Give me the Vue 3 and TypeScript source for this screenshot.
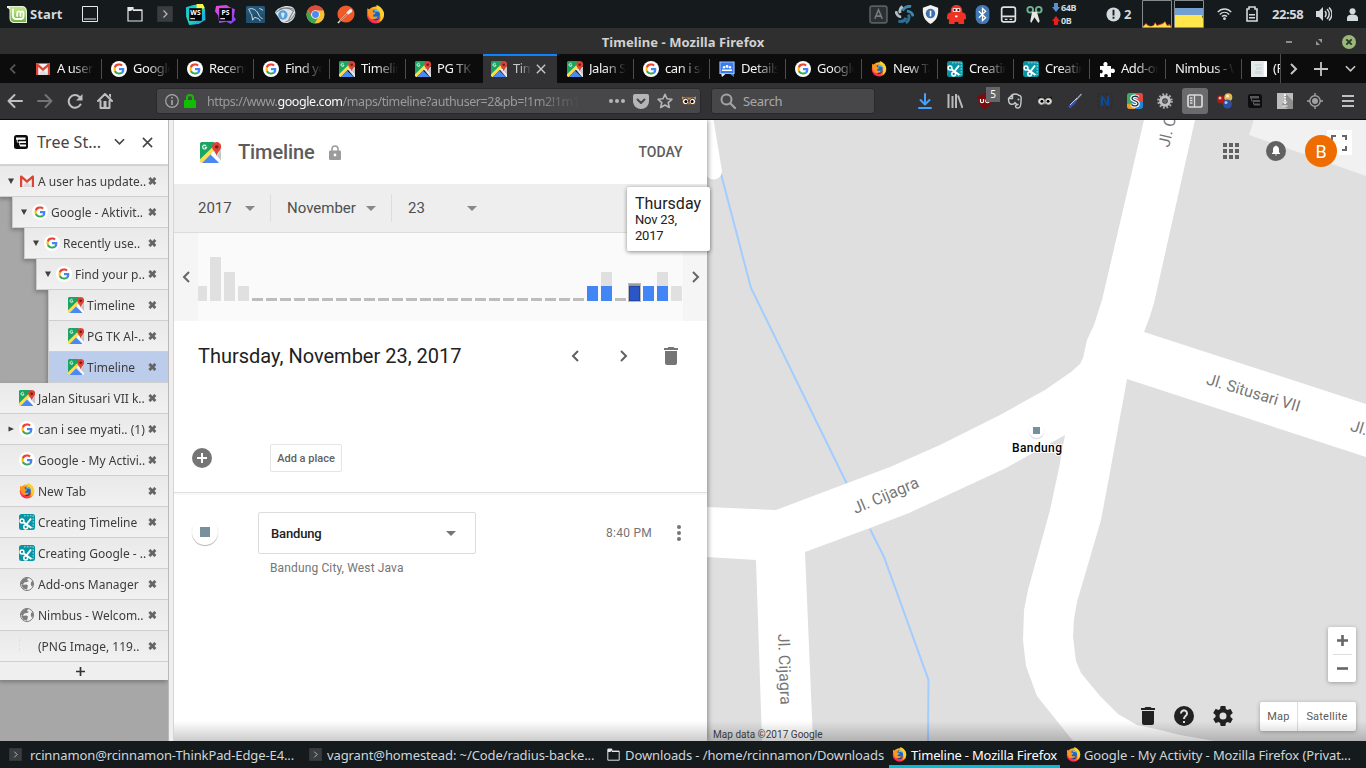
<script setup lang="ts">
interface BrowserTab { icon: string; label: string; active?: boolean }
interface TreeRow { icon: string; label: string; level: number; twisty?: 'open' | 'shut'; active?: boolean }
interface Bar { total: number; blue?: boolean; idle?: boolean; selected?: boolean }

const launchers: string[] = ['folder', 'term', 'ws', 'ps', 'mysql', 'eye', 'chrome', 'postman', 'firefox']
const tray: string[] = ['akey', 'shutter', 'shield', 'robot', 'bt', 'disk', 'clip']

const tabs: BrowserTab[] = [
  { icon: 'gmail', label: 'A user has' },
  { icon: 'gdisc', label: 'Google - A' },
  { icon: 'gdisc', label: 'Recently u' },
  { icon: 'gdisc', label: 'Find your' },
  { icon: 'maps', label: 'Timeline' },
  { icon: 'maps', label: 'PG TK Al' },
  { icon: 'maps', label: 'Timeline', active: true },
  { icon: 'maps', label: 'Jalan Situ' },
  { icon: 'gdisc', label: 'can i see' },
  { icon: 'forum', label: 'Details' },
  { icon: 'gdisc', label: 'Google - M' },
  { icon: 'firefox', label: 'New Tab' },
  { icon: 'snip', label: 'Creating' },
  { icon: 'snip', label: 'Creating' },
  { icon: 'puzzle', label: 'Add-ons' },
  { icon: '', label: 'Nimbus - We' },
  { icon: 'png', label: '(PNG' },
]

const tools: string[] = ['download', 'library', 'ublock', 'evernote', 'owl', 'pen', 'nimbus', 'sfox', 'cog', 'sidebar', 'balls', 'tree', 'zip', 'target']

const rows: TreeRow[] = [
  { icon: 'gmail', label: 'A user has update..', level: 0, twisty: 'open' },
  { icon: 'gdisc', label: 'Google - Aktivit..', level: 1, twisty: 'open' },
  { icon: 'gdisc', label: 'Recently use..', level: 2, twisty: 'open' },
  { icon: 'gdisc', label: 'Find your p..', level: 3, twisty: 'open' },
  { icon: 'maps', label: 'Timeline', level: 4 },
  { icon: 'maps', label: 'PG TK Al-..', level: 4 },
  { icon: 'maps', label: 'Timeline', level: 4, active: true },
  { icon: 'maps', label: 'Jalan Situsari VII k..', level: 0 },
  { icon: 'gdisc', label: 'can i see myati.. (1)', level: 0, twisty: 'shut' },
  { icon: 'gdisc', label: 'Google - My Activi..', level: 0 },
  { icon: 'firefox', label: 'New Tab', level: 0 },
  { icon: 'snip', label: 'Creating Timeline', level: 0 },
  { icon: 'snip', label: 'Creating Google - ..', level: 0 },
  { icon: 'globe', label: 'Add-ons Manager', level: 0 },
  { icon: 'globe', label: 'Nimbus - Welcom..', level: 0 },
  { icon: 'blank', label: '(PNG Image, 119..', level: 0 },
]

const idle = (n: number): Bar[] => Array.from({ length: n }, () => ({ total: 3, idle: true }))
const bars: Bar[] = [
  { total: 15 }, { total: 44 }, { total: 29 }, { total: 15 },
  ...idle(24),
  { total: 15, blue: true }, { total: 29, blue: true },
  ...idle(1),
  { total: 15, blue: true, selected: true }, { total: 15, blue: true }, { total: 29, blue: true }, { total: 15 },
]

const windows = [
  { icon: 'term', label: 'rcinnamon@rcinnamon-ThinkPad-Edge-E4...', cls: 'w1' },
  { icon: 'term', label: 'vagrant@homestead: ~/Code/radius-backe...', cls: 'w2' },
  { icon: 'folder', label: 'Downloads - /home/rcinnamon/Downloads', cls: 'w3' },
  { icon: 'firefox', label: 'Timeline - Mozilla Firefox', cls: 'w4' },
  { icon: 'firefox', label: 'Google - My Activity - Mozilla Firefox (Privat...', cls: 'w5' },
]
</script>

<template>
  <div class="screen">
    <svg class="sprite" width="0" height="0" aria-hidden="true">
      <defs>
        <linearGradient id="fxg" x1="0.8" y1="0" x2="0.2" y2="1">
          <stop offset="0" stop-color="#ffe226" /><stop offset="0.45" stop-color="#ff8a16" /><stop offset="0.8" stop-color="#ff3647" /><stop offset="1" stop-color="#d61b7f" />
        </linearGradient>
        <linearGradient id="wsg" x1="0" y1="0" x2="1" y2="1">
          <stop offset="0" stop-color="#12c0e0" /><stop offset="0.5" stop-color="#20d8b8" /><stop offset="0.75" stop-color="#18b0e0" /><stop offset="1" stop-color="#18c8e0" />
        </linearGradient>
        <linearGradient id="psg" x1="0" y1="0" x2="1" y2="1">
          <stop offset="0" stop-color="#f04ad8" /><stop offset="1" stop-color="#7a45f5" />
        </linearGradient>
        <linearGradient id="mtg" x1="0" y1="0" x2="0" y2="1">
          <stop offset="0" stop-color="#c4e88c" /><stop offset="1" stop-color="#6fb53c" />
        </linearGradient>
      </defs>

      <symbol id="g" viewBox="0 0 24 24">
        <path fill="#4285f4" d="M23.5 12.3c0-.9-.1-1.5-.2-2.2H12v4.500h6.500c-.1 1.100-.8 2.700-2.400 3.800l3.700 2.900c2.300-2.100 3.700-5.200 3.700-9z" />
        <path fill="#34a853" d="M12 24c3.200 0 5.900-1.100 7.900-2.900l-3.800-2.900c-1 .7-2.400 1.200-4.100 1.200-3.100 0-5.800-2.100-6.700-4.900l-3.900 3C3.400 21.400 7.400 24 12 24z" />
        <path fill="#fbbc05" d="M5.300 14.300c-.3-.7-.4-1.500-.4-2.300s.2-1.600.4-2.300L1.300 6.600C.5 8.200 0 10 0 12s.5 3.800 1.300 5.400z" />
        <path fill="#ea4335" d="M12 4.700c2.200 0 3.700 1 4.600 1.800l3.400-3.300C17.900 1.200 15.200 0 12 0 7.400 0 3.400 2.600 1.300 6.600l4 3.100C6.200 6.900 8.900 4.700 12 4.700z" />
      </symbol>
      <symbol id="gdisc" viewBox="0 0 16 16">
        <circle cx="8" cy="8" r="8" fill="#fff" /><use href="#g" x="2.300" y="2.300" width="11.400" height="11.400" />
      </symbol>
      <symbol id="gmail" viewBox="0 0 16 16">
        <path fill="#f2f2f2" d="M1 2.500h14v11.500H1z" /><path fill="#ddd" d="M3 14l5-6 5 6z" />
        <path fill="#db4437" d="M1 14V3.500C1 2.600 2.300 2.100 3 2.700l5 4.300 5-4.300c.7-.6 2-.1 2 .8V14h-2.200V6L8 10 3.200 6v8z" />
      </symbol>
      <symbol id="maps" viewBox="0 0 16 16">
        <path fill="#1da462" d="M1 0h9.500L14 4 1 15.500 0 14V1z" />
        <path fill="#dcdcdc" d="M16 15L10 8l4-3 2 1z" /><path fill="#c4c4c4" d="M16 6v8.500L13 11z" />
        <path fill="#ffdd4b" d="M0 13.200L11.500 2 13.500 4 2 16H1l-1-1z" />
        <path fill="#4a89f3" d="M8 9.600L14.600 16H1.600z" />
        <path fill="#fff" d="M8.600 8.300l1.500-1.200 5.900 7V16h-1z" opacity=".85" />
        <path fill="#db4437" d="M12.600 0a3.600 3.600 0 0 1 3.600 3.600c0 2.600-2.700 3.400-3.500 7-.8-3.600-3.500-4.400-3.500-7A3.600 3.600 0 0 1 12.600 0z" />
        <circle cx="12.700" cy="3.700" r="1.300" fill="#6d1f19" />
        <path fill="none" stroke="#e8f7ee" stroke-width=".9" d="M4.600 2.800a1.500 1.500 0 1 0 .4 1.300H3.600" />
      </symbol>
      <symbol id="firefox" viewBox="0 0 20 20">
        <circle cx="10" cy="10.500" r="9" fill="url(#fxg)" />
        <path fill="#ffcf2e" d="M11 0c4 1.200 8 5 8 10-.4 4-3 6.500-5 7.500 2-3 2-6 0-9-2-2.500-3.500-4.500-3-8.500z" />
        <circle cx="9.700" cy="9.800" r="5" fill="#1967c6" />
        <path fill="#142f8c" d="M5.500 12c2 4 7 4 9.300 0-.8 5.200-8 6-9.300 0z" />
        <path fill="#ff9420" d="M1.500 3.500L4 5.200l4 .3-1 2 3 .5c.3 1.700-3 2-2.500 3.500 1 1.600 3 .4 4.700.8-2 4-8.500 3.500-9.500-.8C2 9 .8 6.500 1.500 3.500z" />
        <path fill="#5fc7f5" d="M9 4.900c2.800-.6 5 1 5.700 3.200C13 6.800 11 6.500 9 7z" />
      </symbol>
      <symbol id="snip" viewBox="0 0 16 16">
        <rect x="0" y="0" width="16" height="16" rx="2.500" fill="#0795a3" />
        <path fill="none" stroke="#fff" stroke-width=".8" stroke-dasharray="1.700 1.200" d="M5 1.800h9.200v12H11" opacity=".8" />
        <g fill="none" stroke="#fff" stroke-width="1.500"><circle cx="3" cy="7" r="1.900" /><circle cx="6.700" cy="13" r="1.900" /><path stroke-width="2" d="M4.500 8.400l8 5.600M7 11l5-6.500" /></g>
      </symbol>
      <symbol id="puzzle" viewBox="0 0 16 16">
        <path fill="#fff" d="M1 5h4c-1.500-2 0-4 1.500-4S9.500 3 8 5h4v3c2-1.500 4 0 4 1.700S14 13 12 11.500V16H8.500c1-2-.3-3-1.500-3s-2.500 1-1.500 3H1v-4c2 1 2.700-.5 2.700-1.500S3 8 1 9z" />
      </symbol>
      <symbol id="forum" viewBox="0 0 16 16">
        <path fill="#e8eefc" d="M2 12h4v1.500L3 16z" /><path fill="#3a7cf0" d="M1 1h14v15l-4-3H1z" /><path fill="none" stroke="#9dbffa" stroke-width="1.200" d="M1 1h14v11.500H1z" />
        <circle cx="5" cy="6.200" r="1.200" fill="#fff" /><circle cx="8" cy="5.500" r="1.400" fill="#fff" /><circle cx="11" cy="6.200" r="1.200" fill="#fff" /><path fill="#fff" d="M3 10V8.500h10V10z" />
      </symbol>
      <symbol id="png" viewBox="0 0 16 16"><path fill="#e6e9e9" d="M0 0h16v16H0z" /><path fill="#c3d7da" d="M4 3h7v2H4zM5 6h6v3H5zM4 10h7v3H4z" opacity=".6" /><path fill="#fff" d="M13 1h3v14h-3z" /></symbol>
      <symbol id="blank" viewBox="0 0 16 16"><path fill="#c9dfeb" d="M0 1h1v3H0zM0 6h1v2H0zM0 10h1v3H0z" opacity=".7" /></symbol>
      <symbol id="globe" viewBox="0 0 16 16">
        <circle cx="8" cy="8" r="6.500" fill="#f2f2f2" stroke="#777" /><path fill="#7d7d7d" d="M2 6c2-4 5-4.500 7-4L8 4l2 1-2 1-3 .5L4 9 2 8zM2.500 9l5-.5 1.500 1-1 4-4-1zM12 6l2-1 .3 3-1 3-1.500-2z" />
      </symbol>

      <symbol id="mint" viewBox="0 0 20 20">
        <path fill="#e9f3dc" d="M0 2h14.500C18 2 20 4 20 7.500V19H8c-4 0-5.500-2-5.500-5V6C2.500 4.500 1.500 4.500 0 4z" />
        <path fill="url(#mtg)" d="M2 3h12.500C17.500 3 19 5 19 7.500V18H8c-3.500 0-4.500-1.500-4.500-4.500V6C3.500 4.500 3 3.700 2 3z" />
        <path fill="none" stroke="#fff" stroke-width="1.800" stroke-linecap="round" d="M6 5.500v6.500c0 2 1 3 3 3h4.500c2 0 3-1 3-3V9c0-2.200-3-2.200-3 0v3M13.500 9c0-2.200-3.300-2.200-3.300 0v3" />
      </symbol>
      <symbol id="desk" viewBox="0 0 16 16"><path fill="none" stroke="#e8e8e8" d="M.5.5h15v15H.5z" /><path fill="#e8e8e8" d="M2 12.500h12v1H2z" /></symbol>
      <symbol id="folder" viewBox="0 0 16 16"><path fill="none" stroke="#e6e6e6" stroke-width="1.200" d="M1 15V1.500h5V4h9v11z" /><path fill="#e6e6e6" d="M1 1h5v2L4 5H1zM6 3.500h9V5H6z" /></symbol>
      <symbol id="term" viewBox="0 0 16 16"><path fill="#393d40" stroke="#2a2d30" d="M0 0h16v16H0z" /><path fill="none" stroke="#bbb" stroke-width="1.200" d="M6.500 4.500L10 8l-3.500 3.500" /></symbol>
      <symbol id="ws" viewBox="0 0 20 20"><path fill="url(#wsg)" d="M1 3l7-2 8-1 3 5 .5 10L13 19 4 20 1 12z" /><path fill="#fcf84a" d="M11 0h6l2 4-8 1z" /><path fill="#000" d="M4 4h12v12H4z" /><text x="10" y="10.500" font-family="Open Sans, sans-serif" font-size="6.500" font-weight="700" fill="#fff" text-anchor="middle">WS</text><path fill="#fff" d="M5 13.500h4.500v1H5z" /></symbol>
      <symbol id="ps" viewBox="0 0 20 20"><path fill="url(#psg)" d="M1 2l10-1 3 2 5 2-1 7 2 3-5 4-4-2-7 1-1-7-3-4z" /><path fill="#000" d="M4 4h12v12H4z" /><text x="10" y="10.500" font-family="Open Sans, sans-serif" font-size="6.500" font-weight="700" fill="#fff" text-anchor="middle">PS</text><path fill="#fff" d="M5 13.500h4.500v1H5z" /></symbol>
      <symbol id="mysql" viewBox="0 0 20 20"><rect x="0" y="1" width="20" height="18" rx="1.500" fill="#265778" /><path fill="#1b4563" d="M0 10h20v8H0z" opacity=".5" /><path fill="none" stroke="#d6e4ec" d="M2.500 4.500c5-2 9 1 11 6 .7 2 2 3 4 4M3 5c2 2 1 4 3 5l1 6 2-3c3 1 5 1 6 4M14 3.500l4 2" /></symbol>
      <symbol id="eye" viewBox="0 0 20 20"><path fill="#dce2e6" d="M0 8c3-6 14-8 18-4 3 5 1 12-6 14-4 .5-7-1-8-4z" /><path fill="none" stroke="#79858e" d="M1 8c6-5 12-5 17-1M4 5c5-2 9-2 14 0M19 9c-2 5-5 7-9 8M18 6l-5 9" /><circle cx="7.500" cy="10.500" r="4.500" fill="#5aa0d8" /><path fill="#fff" d="M5.800 9a2 2 0 0 1 3.400 0c0 1.500-.8 2-1 4H6.800c-.2-2-1-2.500-1-4z" opacity=".75" /></symbol>
      <symbol id="chrome" viewBox="0 0 20 20"><circle cx="10" cy="10" r="9.500" fill="#fbc02d" /><path fill="#dd4b3e" d="M1.800 5.300A9.500 9.500 0 0 1 18.400 5.700H10a4.500 4.500 0 0 0-4.200 5.800z" /><path fill="#3aa757" d="M1.800 5.300A9.500 9.500 0 0 0 9 19.500L13 13a4.500 4.500 0 0 1-7-1z" /><circle cx="10" cy="10" r="4.600" fill="#f1f1f1" /><circle cx="10" cy="10" r="3.600" fill="#4a8af4" /></symbol>
      <symbol id="postman" viewBox="0 0 20 20"><circle cx="10.500" cy="9.500" r="9" fill="#f05a28" /><path stroke="#f5d9cc" stroke-width="1.600" d="M2 19l10-10" /><path stroke="#7a4a38" stroke-width=".8" d="M4 17l8-8" /><path fill="#eee" d="M11 8l4-4 2 1v2l-4 3z" /></symbol>

      <symbol id="akey" viewBox="0 0 18 18"><rect x="1" y="1" width="16" height="16" rx="2" fill="#2b3033" stroke="#585d60" stroke-width="1.600" /><path fill="none" stroke="#787c7e" stroke-width="1.500" d="M5.500 13L9 4.500l3.500 8.500M6.700 10.500h4.600" /></symbol>
      <symbol id="shutter" viewBox="0 0 20 20"><g fill="none" stroke-width="3"><path stroke="#3a8ab0" d="M8 6c1-3 5-5 9-4.500M12.500 6.500c3 0 6 2 6.500 5.500" /><path stroke="#2b7197" d="M14 10c1.500 3 .5 6.500-2.500 9M11.500 13.500c-1 3-4 4.500-8 3.500" /><path stroke="#b5bec4" d="M6.500 12.500C4 12.500 1.500 10 1 6.500M5.500 8.500C4.500 6 5.500 3 8 1.500" /></g></symbol>
      <symbol id="shield" viewBox="0 0 18 20"><path fill="#f3f3f0" d="M9 0l8 3c.5 8-1 13-8 17C2 16 .5 11 1 3z" /><circle cx="9" cy="9" r="5" fill="#3e71ad" /><path fill="#fff" d="M8.200 6h1.600v6H8.200z" /></symbol>
      <symbol id="robot" viewBox="0 0 20 20"><path fill="#f03225" d="M4 6c0-8 12-8 12 0v2c3 0 4 2 4 5v2h-2v5h-6v-2H8v2H2v-5H0v-2c0-3 1-5 4-5z" /><path fill="#fff" d="M6 3.500h8v3.500H6zM8.500 11h2.500v2H8.500z" /><path fill="#222" d="M7 4.300h2v2H7zM11 4.300h2v2h-2z" /></symbol>
      <symbol id="bt" viewBox="0 0 14 18"><rect x=".5" width="13" height="18" rx="6" fill="#4477b5" /><path fill="none" stroke="#fff" stroke-width="1.200" d="M3.500 6l6.500 6-3 2.700V3.200L10 6l-6.500 6" /></symbol>
      <symbol id="disk" viewBox="0 0 18 18"><rect x="2.500" y="2" width="13" height="14" rx="2" fill="none" stroke="#e1e1df" stroke-width="1.600" /><path fill="#e1e1df" d="M3 10h12v1.500H3zM5.500 13H8v1.300H5.500zM10 13h2.500v1.300H10z" /></symbol>
      <symbol id="clip" viewBox="0 0 18 20"><g fill="none" stroke="#70b191" stroke-width="2"><circle cx="4.500" cy="5" r="3" /><circle cx="13.500" cy="5" r="3" /></g><path fill="#e7e7e2" d="M6.500 7h5l3 10-1.500 2L9 13l-3.500 6-1-2z" /></symbol>
      <symbol id="alert" viewBox="0 0 16 16"><circle cx="8" cy="8" r="7.500" fill="#d3dadd" /><path fill="#151a1d" d="M7 3h2v6H7zM7 10.500h2v2H7z" /></symbol>
      <symbol id="wifi" viewBox="0 0 16 14"><g fill="none" stroke="#d3dadd" stroke-width="1.500"><path d="M.8 5c4-4.500 10.400-4.500 14.400 0M3 7.500c3-3 7-3 10 0M5.300 9.700c2-1.500 3.500-1.500 5.400 0" /></g><circle cx="8" cy="12" r="1.500" fill="#d3dadd" /></symbol>
      <symbol id="batt" viewBox="0 0 12 16"><path fill="none" stroke="#d3dadd" stroke-width="1.600" d="M1 3h2V1h6v2h2v12H1z" /><path fill="#d3dadd" d="M3 8h6v1.500H3zM3 11h6v1.500H3z" /></symbol>
      <symbol id="vol" viewBox="0 0 16 14"><path fill="#d3dadd" d="M0 4h3l4-4v14l-4-4H0z" /><path fill="none" stroke="#d3dadd" stroke-width="1.500" d="M9 4c1.500 2 1.500 4 0 6M11 2c3 3 3 7 0 10M13 .5c4 4 4 9 0 13" /></symbol>
      <symbol id="user" viewBox="0 0 12 14"><circle cx="6" cy="3.500" r="3.300" fill="#d3dadd" /><path fill="#d3dadd" d="M0 14v-3c0-3 3-4 6-4s6 1 6 4v3z" /></symbol>

      <symbol id="download" viewBox="0 0 16 16"><path fill="none" stroke="#45a1ff" stroke-width="2" stroke-linecap="round" stroke-linejoin="round" d="M8 1v10M3.500 7L8 11.500 12.500 7M2 15h12" /></symbol>
      <symbol id="library" viewBox="0 0 16 16"><path fill="none" stroke="#b9b9ba" stroke-width="2" d="M1.500 1v14M5.500 3v12M9 1v14M11 2.500L15.500 15" /></symbol>
      <symbol id="ublock" viewBox="0 0 16 16"><path fill="#7d0a0c" d="M8 0c2 1.500 4.500 2 7 2 .3 7-1 10.500-7 14C2 12.500.7 9 1 2c2.500 0 5-.5 7-2z" /><path fill="none" stroke="#fff" stroke-width="1.200" d="M3.500 6v2.500c0 1.500 3 1.500 3 0V6" /><circle cx="10.500" cy="8" r="1.800" fill="none" stroke="#fff" stroke-width="1.100" /></symbol>
      <symbol id="evernote" viewBox="0 0 16 16"><path fill="none" stroke="#c5cbca" stroke-width="1.400" stroke-linejoin="round" d="M1.500 5.500h4V1.500zM1.500 5.500c0 3 .5 5 2 5.500 2 .5 4 .3 4.500-1.500.5 1.500 2 2 3.500 2M5.500 1.500c3-1 5-.5 6 .7 2.500.2 3 1.500 2.500 5.800 0 4-.5 7-3 7-3.500 0-3-3.500-.3-3.300" /><circle cx="11.500" cy="6.500" r="1" fill="#c5cbca" /></symbol>
      <symbol id="owl" viewBox="0 0 16 16"><path fill="#1b1715" d="M1 3.500l7 1.500 7-1.500V7H1z" /><circle cx="4.500" cy="8.300" r="3.100" fill="#eee" stroke="#a5a3a0" /><circle cx="11.500" cy="8.300" r="3.100" fill="#eee" stroke="#a5a3a0" /><circle cx="4.900" cy="8.300" r="1.500" /><circle cx="11.100" cy="8.300" r="1.500" /><path fill="#bbb" d="M7 9.500h2l-1 2.500z" /></symbol>
      <symbol id="owl2" viewBox="0 0 16 16"><path fill="#c98f4c" d="M1 3.500l3 1h8l3-1V7H1z" /><circle cx="4.500" cy="8.500" r="3.200" fill="#fff" stroke="#4a2e1d" /><circle cx="11.500" cy="8.500" r="3.200" fill="#fff" stroke="#4a2e1d" /><circle cx="4.900" cy="8.500" r="1.500" /><circle cx="11.100" cy="8.500" r="1.500" /><path fill="#e58e2e" d="M7 9.500h2L8 12z" /></symbol>
      <symbol id="pen" viewBox="0 0 16 16"><path stroke="#9fa6b8" stroke-width="1.300" d="M8 8l6.500-7" /><path stroke="#3450c8" stroke-width="3" stroke-linecap="round" d="M3 13.500l5-5" /><path stroke="#cdd5ff" stroke-width=".9" d="M3 12l7-7" /></symbol>
      <symbol id="nimbus" viewBox="0 0 16 16"><path fill="none" stroke="#29292c" stroke-dasharray="2 2" d="M1 1h14v14H1z" /><path fill="#084a9b" d="M3.800 12.500v-9h2.400l3.800 6v-6h2.300v9H9.900l-3.800-6v6z" /></symbol>
      <symbol id="sfox" viewBox="0 0 16 16"><rect width="16" height="16" rx="3" fill="#1d87d8" /><path fill="#e2483d" d="M7 0h6a3 3 0 0 1 3 3v6L8 8z" /><path fill="#37ac62" d="M3 0h6L6 9l-6 3V3a3 3 0 0 1 3-3z" /><path fill="#ed9b28" d="M0 11l6-1 2 6H3a3 3 0 0 1-3-3z" /><path fill="none" stroke="#fff" stroke-width="3.600" d="M11.500 4.500C9 2.500 5 3 5 5.500s6 2 6 5-4.500 3-6.500 1" /><path fill="none" stroke="#1c2f48" stroke-width="1.300" d="M11.500 4.500C9 2.500 5 3 5 5.500s6 2 6 5-4.500 3-6.500 1" /></symbol>
      <symbol id="cog" viewBox="0 0 16 16"><circle cx="8" cy="8" r="6.500" fill="none" stroke="#aaa" stroke-width="2.500" stroke-dasharray="1.800 1.600" /><circle cx="8" cy="8" r="4.300" fill="none" stroke="#c2c2c2" stroke-width="3" /><circle cx="8" cy="8" r="2" fill="#66686b" /></symbol>
      <symbol id="sidebar" viewBox="0 0 16 16"><rect x="1" y="2" width="14" height="12" rx="1.800" fill="none" stroke="#dadada" stroke-width="1.700" /><path stroke="#dadada" stroke-width="1.300" d="M7.500 2v12M3 5h2.500M3 7.500h2.500M3 10h2.500" /></symbol>
      <symbol id="balls" viewBox="0 0 16 16"><circle cx="4" cy="6.500" r="4" fill="#a71d1d" /><circle cx="11.300" cy="4.200" r="4" fill="#e5b752" /><circle cx="10.500" cy="11" r="4.500" fill="#2d50a3" /><circle cx="3" cy="5" r="1.500" fill="#f5b6a8" /><circle cx="10.500" cy="3" r="1.500" fill="#fff2c5" /><circle cx="9" cy="9.500" r="1.500" fill="#a9c3f5" /></symbol>
      <symbol id="tree" viewBox="0 0 16 16"><rect x="1" y="1" width="14" height="14" rx="2.500" fill="#0d0d0d" /><path fill="#58585c" d="M3 3h9v2.500H3zM6 7h7v2H6zM7 10.500h6v2H7z" /><path fill="none" stroke="#58585c" d="M4.500 5v3H6M6.500 9v2.500" /></symbol>
      <symbol id="zip" viewBox="0 0 16 16"><path fill="#bcbcbc" d="M0 0h16v16H0z" /><path fill="#8f8f8f" d="M9 1l7 7v8h-5L5 12z" /><path fill="#f5f5f5" d="M7 1h2v2H7zM7 4h2v1.500H7zM7 6.500h2V8H7zM5.500 8.500h5L8 11.500zM5.500 12.500h5v1h-5z" /></symbol>
      <symbol id="target" viewBox="0 0 16 16"><circle cx="8" cy="8" r="5.200" fill="none" stroke="#a2a2a4" stroke-width="1.400" /><circle cx="8" cy="8" r="3" fill="#a2a2a4" /><path stroke="#a2a2a4" stroke-width="1.400" d="M8 0v3M8 13v3M0 8h3M13 8h3" /></symbol>

      <symbol id="tri" viewBox="0 0 10 5"><path fill="currentColor" d="M0 0h10L5 5z" /></symbol>
      <symbol id="open" viewBox="0 0 6 6"><path fill="#3f3f3f" d="M0 .5h6L3 6z" /></symbol>
      <symbol id="shut" viewBox="0 0 6 6"><path fill="#3f3f3f" d="M.5 .5L6 3 .5 5.500z" /></symbol>
      <symbol id="chl" viewBox="0 0 8 12"><path fill="none" stroke="currentColor" stroke-width="2" d="M7 1L2 6l5 5" /></symbol>
      <symbol id="chr" viewBox="0 0 8 12"><path fill="none" stroke="currentColor" stroke-width="2" d="M1 1l5 5-5 5" /></symbol>
      <symbol id="chd" viewBox="0 0 12 8"><path fill="none" stroke="currentColor" stroke-width="1.800" d="M1 1l5 5 5-5" /></symbol>
      <symbol id="cross" viewBox="0 0 12 12"><path stroke="currentColor" stroke-width="1.700" d="M1 1l10 10M11 1L1 11" /></symbol>
      <symbol id="trash" viewBox="0 0 14 18"><path fill="currentColor" d="M1 4h12v12a2 2 0 0 1-2 2H3a2 2 0 0 1-2-2zM0 1h3.500l1-1h5l1 1H14v2H0z" /></symbol>
      <symbol id="help" viewBox="0 0 20 20"><circle cx="10" cy="10" r="10" fill="#212121" /><path fill="none" stroke="#e0e0e0" stroke-width="2" d="M7 7.500a3 3 0 1 1 4.800 2.300C10.800 10.600 10 11 10 13" /><path fill="#e0e0e0" d="M9 15h2v2H9z" /></symbol>
      <symbol id="gear" viewBox="2 2 20 20"><path fill="#212121" d="M19.430 12.980c.04-.32.07-.64.07-.98s-.03-.66-.07-.98l2.110-1.650c.19-.15.240-.42.120-.64l-2-3.460c-.12-.22-.39-.3-.61-.22l-2.490 1c-.52-.4-1.080-.73-1.690-.98l-.38-2.650C14.460 2.180 14.250 2 14 2h-4c-.25 0-.46.180-.49.420l-.38 2.650c-.61.250-1.170.590-1.690.98l-2.490-1c-.23-.09-.49 0-.61.220l-2 3.460c-.13.220-.07.490.12.640l2.110 1.650c-.04.320-.07.650-.07.980s.03.660.07.980l-2.110 1.650c-.19.150-.240.420-.12.640l2 3.460c.12.220.39.300.61.220l2.490-1c.52.400 1.080.730 1.690.980l.38 2.650c.03.240.240.420.49.420h4c.25 0 .46-.18.49-.42l.38-2.650c.61-.25 1.170-.59 1.690-.98l2.490 1c.23.090.49 0 .61-.22l2-3.460c.12-.22.07-.49-.12-.64zM12 15.500a3.500 3.500 0 1 1 0-7 3.500 3.500 0 0 1 0 7z" /></symbol>
    </svg>

    <header class="panel">
      <svg class="mint"><use href="#mint" /></svg>
      <span class="start">Start</span>
      <svg class="desk"><use href="#desk" /></svg>
      <div class="launchers">
        <span v-for="name in launchers" :key="name" class="cell30"><svg :class="['ic', 'l-' + name]"><use :href="'#' + name" /></svg></span>
      </div>
      <div class="tray">
        <span v-for="name in tray" :key="name" class="cell26"><svg class="i18"><use :href="'#' + name" /></svg></span>
      </div>
      <div class="net">
        <div class="netline"><svg width="8" height="9" viewBox="0 0 8 9"><path fill="#5a8fd0" d="M2 0h4v4h2L4 9 0 4h2z" /></svg>64B</div>
        <div class="netline"><svg width="8" height="9" viewBox="0 0 8 9"><path fill="#e32020" d="M2 9h4V5h2L4 0 0 5h2z" /></svg>0B</div>
      </div>
      <svg class="alert"><use href="#alert" /></svg><span class="two">2</span>
      <svg class="graph" viewBox="0 0 30 28"><path fill="#151a1d" stroke="#858a8c" d="M.5.500h29v27H.5z" /><path fill="#e0402a" d="M1 27v-1l3-3 2 2 3 1 3-1 1-3 2 3 3-1 3-1 2-2 2 4 3-1 1 3z" /><path fill="#ffe14a" d="M1 27l3-3 2 2 3 .5 3-1 1-2.500 2 3 3-1 3-1 2-2 2 4 3-.5 1 1.500z" /></svg>
      <svg class="graph" viewBox="0 0 30 28"><path fill="#0f1417" stroke="#858a8c" d="M.5.500h29v27H.5z" /><path fill="#729fcf" d="M1 8h28v8H1z" /><path fill="#ffe64d" d="M1 15h27l1 4v8H1z" /></svg>
      <svg class="wifi"><use href="#wifi" /></svg>
      <svg class="batt"><use href="#batt" /></svg>
      <span class="clock">22:58</span>
      <svg class="vol"><use href="#vol" /></svg>
      <svg class="user"><use href="#user" /></svg>
    </header>

    <div class="titlebar">
      <span class="wtitle">Timeline - Mozilla Firefox</span>
      <div class="wbtns">
        <span class="minbtn"></span>
        <svg width="6" height="6" viewBox="0 0 6 6"><path fill="#999" d="M2 0h4v4zM0 2l4 4H0z" /></svg>
        <svg width="14" height="14" viewBox="0 0 14 14"><circle cx="7" cy="7" r="7" fill="#9ab87c" /><path stroke="#2d3326" stroke-width="1.800" d="M4.300 4.300l5.400 5.400M9.700 4.300L4.300 9.700" /></svg>
      </div>
    </div>

    <nav class="tabs">
      <span class="scroll dim"><svg width="7" height="12"><use href="#chl" /></svg></span>
      <div class="tablist">
        <div v-for="(t, i) in tabs" :key="i" :class="['tab', { active: t.active, before: i === 5, noicon: !t.icon }]">
          <svg v-if="t.icon" class="i16"><use :href="'#' + t.icon" /></svg>
          <span class="tlabel">{{ t.label }}</span>
          <svg v-if="t.active" class="tclose"><use href="#cross" /></svg>
        </div>
      </div>
      <span class="scroll right"><svg width="8" height="12"><use href="#chr" /></svg></span>
      <svg class="plus" viewBox="0 0 14 14"><path stroke="#c5c5c5" stroke-width="1.800" d="M7 0v14M0 7h14" /></svg>
      <svg class="down"><use href="#chd" /></svg>
    </nav>

    <div class="toolbar">
      <div class="navbtns">
        <svg width="16" height="16" viewBox="0 0 16 16"><path fill="none" stroke="#bfbfc0" stroke-width="2" stroke-linecap="round" stroke-linejoin="round" d="M15 8H1.500M7.500 2l-6 6 6 6" /></svg>
        <svg width="16" height="16" viewBox="0 0 16 16"><path fill="none" stroke="#747476" stroke-width="2" stroke-linecap="round" stroke-linejoin="round" d="M1 8h13.500M8.500 2l6 6-6 6" /></svg>
        <svg width="16" height="16" viewBox="0 0 16 16"><path fill="none" stroke="#bfbfc0" stroke-width="2" stroke-linecap="round" d="M13.500 11.500A6.300 6.300 0 1 1 12.500 4" /><path fill="#bfbfc0" d="M15.500 1v6.500H9z" /></svg>
        <svg width="16" height="16" viewBox="0 0 16 16"><path fill="none" stroke="#bfbfc0" stroke-width="2" stroke-linecap="round" stroke-linejoin="round" d="M1 8l7-7 7 7M3.500 8v7h9V8" /><path fill="#bfbfc0" d="M6.500 8h3v7h-3zM12 1h2v4l-2-2z" /></svg>
      </div>
      <div class="urlbar">
        <svg width="14" height="14" viewBox="0 0 14 14"><circle cx="7" cy="7" r="6.300" fill="none" stroke="#a8a8a9" stroke-width="1.200" /><path fill="#a8a8a9" d="M6.200 3h1.600v1.600H6.200zM6.200 6h1.600v5H6.200z" /></svg>
        <svg class="lockg" width="12" height="14" viewBox="0 0 12 14"><path fill="none" stroke="#12bc00" stroke-width="2" d="M3 7V4a3 3 0 0 1 6 0v3" /><rect y="6" width="12" height="8" rx="1" fill="#12bc00" /></svg>
        <span class="url">https://www.<b>google.com</b>/maps/timeline?authuser=2&amp;pb=!1m2!1m1</span>
        <div class="urlicons">
          <svg width="16" height="4" viewBox="0 0 16 4"><g fill="#b5b5b6"><circle cx="2" cy="2" r="2" /><circle cx="8" cy="2" r="2" /><circle cx="14" cy="2" r="2" /></g></svg>
          <svg width="16" height="15" viewBox="0 0 16 15"><path fill="#b5b5b6" d="M2 0h12a2 2 0 0 1 2 2v5c0 5-4 8-8 8S0 12 0 7V2a2 2 0 0 1 2-2z" /><path fill="none" stroke="#474749" stroke-width="2" stroke-linecap="round" stroke-linejoin="round" d="M4.500 5.500L8 9l3.500-3.500" /></svg>
          <svg width="16" height="16" viewBox="0 0 16 16"><path fill="none" stroke="#b5b5b6" stroke-width="1.600" stroke-linejoin="round" d="M8 1.300l2 4.500 4.900.5-3.700 3.300 1.100 4.900L8 12l-4.300 2.500 1.100-4.900L1.100 6.300 6 5.800z" /></svg>
          <svg class="i16"><use href="#owl2" /></svg>
        </div>
      </div>
      <div class="search">
        <svg width="16" height="16" viewBox="0 0 16 16"><circle cx="6.500" cy="6.500" r="5" fill="none" stroke="#a3a3a4" stroke-width="2" /><path stroke="#a3a3a4" stroke-width="2.200" stroke-linecap="round" d="M10.300 10.300L15 15" /></svg>
        <span>Search</span>
      </div>
      <div class="tools">
        <span v-for="name in tools" :key="name" :class="['cell30', { pressed: name === 'sidebar' }]">
          <svg class="i16"><use :href="'#' + name" /></svg>
          <span v-if="name === 'ublock'" class="badge">5</span>
        </span>
      </div>
      <svg class="menu" width="12" height="12" viewBox="0 0 12 12"><path fill="#c0c0c1" d="M0 0h12v2H0zM0 5h12v2H0zM0 10h12v2H0z" /></svg>
    </div>

    <main class="content">
      <aside class="sidebar">
        <div class="sbhead">
          <svg width="14" height="14" viewBox="0 0 14 14"><rect width="14" height="14" rx="2.500" fill="#0c0c0d" /><path fill="#fff" d="M2 2.500h9.500v2.300H2zM5 6.200h7v1.900H5zM6 9.500h6v2H6z" /><path fill="none" stroke="#fff" stroke-width=".8" d="M3.300 4v3.200H5M5.600 8v2.500" /></svg>
          <span class="sbtitle">Tree St...</span>
          <svg class="sbdown"><use href="#chd" /></svg>
          <svg class="sbx"><use href="#cross" /></svg>
        </div>
        <div class="rows">
          <div v-for="(r, i) in rows" :key="i" :class="['trow', 'lv' + r.level, { sel: r.active }]">
            <span class="twisty"><svg v-if="r.twisty" width="6" height="6"><use :href="'#' + r.twisty" /></svg></span>
            <svg class="i16"><use :href="'#' + r.icon" /></svg>
            <span class="rlabel">{{ r.label }}</span>
            <span class="rx">✖</span>
          </div>
          <div class="addrow"><svg width="9" height="9" viewBox="0 0 9 9"><path stroke="#333" stroke-width="1.700" d="M4.500 0v9M0 4.500h9" /></svg></div>
        </div>
      </aside>
      <div class="splitter"></div>

      <section class="timeline">
        <div class="thead">
          <svg class="tlogo"><use href="#maps" /></svg>
          <h1>Timeline</h1>
          <svg class="tlock" viewBox="0 0 12 15"><path fill="none" stroke="#9b9b9b" stroke-width="1.500" d="M3 6V4a3 3 0 0 1 6 0v2" /><rect y="5.500" width="12" height="9.500" rx="1.300" fill="#9b9b9b" /><circle cx="6" cy="10" r="1.400" fill="#fff" /></svg>
          <span class="today">TODAY</span>
        </div>
        <div class="filters">
          <div class="filter year">2017<svg class="tri"><use href="#tri" /></svg></div>
          <div class="filter month">November<svg class="tri"><use href="#tri" /></svg></div>
          <div class="filter day">23<svg class="tri"><use href="#tri" /></svg></div>
          <div class="tip"><strong>Thursday</strong><span>Nov 23,<br>2017</span></div>
        </div>
        <div class="chart">
          <span class="strip"><svg width="8" height="12"><use href="#chl" /></svg></span>
          <div class="bars">
            <div v-for="(b, i) in bars" :key="i" :class="['bar', { idle: b.idle, cur: b.selected }]" :style="{ height: b.total + 'px' }">
              <i v-if="b.blue"></i>
            </div>
          </div>
          <span class="strip"><svg width="8" height="12"><use href="#chr" /></svg></span>
        </div>
        <div class="dateline">
          <h2>Thursday, November 23, 2017</h2>
          <svg class="dprev"><use href="#chl" /></svg>
          <svg class="dnext"><use href="#chr" /></svg>
          <svg class="dtrash"><use href="#trash" /></svg>
        </div>
        <div class="addplace">
          <svg width="20" height="20" viewBox="0 0 20 20"><circle cx="10" cy="10" r="10" fill="#757575" /><path stroke="#fff" stroke-width="2" d="M10 5v10M5 10h10" /></svg>
          <span class="btn">Add a place</span>
        </div>
        <div class="place">
          <span class="pin"><i></i></span>
          <div class="select">Bandung<svg class="tri"><use href="#tri" /></svg></div>
          <span class="time">8:40 PM</span>
          <svg class="kebab" width="4" height="16" viewBox="0 0 4 16"><g fill="#757575"><circle cx="2" cy="2" r="2" /><circle cx="2" cy="8" r="2" /><circle cx="2" cy="14" r="2" /></g></svg>
        </div>
        <div class="addr">Bandung City, West Java</div>
      </section>

      <section class="map">
        <svg class="roads" viewBox="707 120 659 621">
          <path fill="#dfdfdf" d="M707 120h659v621H707z" />
          <path fill="#f1f1f1" d="M1254 120l-5 15 117 41v-56z" />
          <path fill="none" stroke="#a3ccff" stroke-width="2" d="M721 174l30 114 96 196M870 529l14 28 44.500 123-.5 61" />
          <path fill="#fff" d="M707 120h6.500l8.500 51q-1 8-8 8.500-4 0-7-3z" />
          <path fill="#fff" d="M1144 120l-42 180-8 25-7 15-4 18-3 6-9 8-26 18-45 25-60 30-50 22-114 43-69-3v50l49 3 6 181h51l-8-189 65-24 39-15 97-45 59-33-6 33-9 42-22 80-4 20-1 30 3 26 8 22 3 8 36 45h141l-34-6-20-5-23-5-19-11-18-18-19-23-5-12-3-24 1-18 3-17 24-82 9-48 17-93 239 78v-53l-222-72 6-16 4-13 41-183z" />
          <g fill="#777" font-family="Roboto, sans-serif" font-size="16" stroke="#fff" stroke-width="3" paint-order="stroke">
            <text transform="translate(1205.500 384) rotate(16.800)" textLength="97">Jl. Situsari VII</text>
            <text transform="translate(855.500 514) rotate(-23)" textLength="70">Jl. Cijagra</text>
            <text transform="translate(778 634) rotate(88)" textLength="71">Jl. Cijagra</text>
            <text transform="translate(1169 148) rotate(-77)">Jl. Cijagra</text>
            <text transform="translate(1349.500 430.500) rotate(17)">Jl. Situsari VII</text>
          </g>
          <circle cx="1036.500" cy="431" r="8" fill="#d4d4d4" /><circle cx="1036.500" cy="430.200" r="8" fill="#fff" />
          <path fill="#78909c" d="M1033 427h7v7h-7z" />
          <text x="1037" y="452" text-anchor="middle" textLength="50" font-family="Roboto, sans-serif" font-size="12" font-weight="500" fill="#000" stroke="#fff" stroke-width="2" paint-order="stroke">Bandung</text>
          <text x="713" y="738" font-family="Roboto, sans-serif" font-size="10" fill="#444" textLength="109.500">Map data ©2017 Google</text>
        </svg>
        <div class="account">
          <svg width="16" height="16" viewBox="0 0 16 16"><path fill="#616161" d="M0 0h4v4H0zM6 0h4v4H6zM12 0h4v4h-4zM0 6h4v4H0zM6 6h4v4H6zM12 6h4v4h-4zM0 12h4v4H0zM6 12h4v4H6zM12 12h4v4h-4z" /></svg>
          <svg width="20" height="20" viewBox="0 0 20 20"><circle cx="10" cy="10" r="10" fill="#616161" /><path fill="#fff" d="M6 13v-.800l1-1V8.500c0-2 1-3 2.200-3.300a.8.8 0 0 1 1.600 0C12 5.500 13 6.500 13 8.500v2.700l1 1v.8zM9 13.500h2a1 1 0 0 1-2 0z" /></svg>
          <span class="avatar">B</span>
        </div>
        <div class="full"><svg width="16" height="16" viewBox="0 0 16 16"><path fill="none" stroke="#666" stroke-width="2" d="M1 5V1h4M11 1h4v4M15 11v4h-4M5 15H1v-4" /></svg></div>
        <div class="zoom"><svg width="11" height="11" viewBox="0 0 11 11"><path stroke="#666" stroke-width="2.600" d="M5.500 0v11M0 5.500h11" /></svg><hr><svg width="11" height="11" viewBox="0 0 11 11"><path stroke="#666" stroke-width="2.600" d="M0 5.500h11" /></svg></div>
        <div class="mapbar">
          <svg class="mtrash"><use href="#trash" /></svg>
          <svg class="m20"><use href="#help" /></svg>
          <svg class="m20"><use href="#gear" /></svg>
          <div class="types"><span>Map</span><span>Satellite</span></div>
        </div>
      </section>
      <div class="fade"></div>
    </main>

    <footer class="taskbar">
      <div v-for="w in windows" :key="w.cls" :class="['win', w.cls]">
        <svg><use :href="'#' + w.icon" /></svg><span>{{ w.label }}</span>
      </div>
    </footer>
  </div>
</template>

<style>
html, body { margin: 0; overflow: hidden; }
</style>

<style scoped>
* { box-sizing: border-box; }
svg { display: block; flex: none; }
.screen { width: 1366px; height: 768px; display: flex; flex-direction: column; overflow: hidden; font-family: "Noto Sans", sans-serif; position: relative; }
.sprite { position: absolute; }
.i16 { width: 16px; height: 16px; }
.i18 { width: 18px; height: 18px; }
.cell30, .cell26 { display: flex; align-items: center; justify-content: center; width: 30px; flex: none; position: relative; }
.cell26 { width: 26px; }

.panel { height: 28px; flex: none; background: #151a1d; display: flex; align-items: center; color: #d3dadd; }
.mint { width: 20px; height: 20px; margin-left: 7px; }
.start { font-weight: 700; font-size: 13px; margin-left: 3px; width: 52px; letter-spacing: 0.1px; }
.desk { width: 16px; height: 16px; }
.launchers { display: flex; margin-left: 22px; width: 745px; }
.ic { width: 19px; height: 19px; }
.l-folder, .l-term { width: 16px; height: 16px; }
.l-ws, .l-ps, .l-eye { width: 21px; height: 21px; }
.tray { display: flex; width: 183px; }
.tray .i18 { width: 19px; height: 19px; }
.net { width: 58px; margin-left: 4px; font-size: 9px; font-weight: 700; line-height: 12px; letter-spacing: -0.4px; }
.netline { display: flex; align-items: center; gap: 1px; height: 13px; }
.alert { width: 15px; height: 15px; margin-left: -4px; }
.two { font-size: 13px; font-weight: 700; width: 18px; margin-left: 3px; }
.graph { width: 30px; height: 28px; margin-right: 2px; }
.wifi { width: 15px; height: 14px; margin-left: 11px; }
.batt { width: 12px; height: 16px; margin-left: 14px; }
.clock { font-size: 13px; font-weight: 700; width: 34px; margin-left: 14px; letter-spacing: -0.4px; white-space: nowrap; }
.vol { width: 16px; height: 14px; margin-left: 10px; }
.user { width: 11px; height: 13px; margin-left: 15px; }

.titlebar { height: 26px; flex: none; background: #2f2f2f; display: grid; grid-template-columns: 1366px; align-items: center; justify-items: center; }
.titlebar > * { grid-row: 1; grid-column: 1; }
.wtitle { font-size: 13px; font-weight: 700; color: #d2d2d0; line-height: 26px; padding-top: 1px; letter-spacing: 0.06px; }
.wbtns { justify-self: end; display: flex; align-items: center; padding-right: 10px; }
.minbtn { width: 6px; height: 2px; background: #8c8c8c; margin-right: 24px; }
.wbtns svg + svg { margin-left: 20px; }

.tabs { height: 29px; flex: none; background: #0c0c0d; display: flex; align-items: center; color: #c5c5c5; }
.scroll { width: 26px; flex: none; padding-left: 9px; }
.dim { color: #5a5a5b; }
.tablist { display: flex; width: 1255px; height: 29px; overflow: hidden; border-right: 1px solid #4d4d4e; }
.tab { width: 76px; flex: none; display: flex; align-items: center; padding-left: 9px; gap: 6px; height: 29px; background: linear-gradient(#4d4d4e, #4d4d4e) 75px 5px / 1px 20px no-repeat; }
.tab.before { background: none; }
.tab.active { background: #323234; border-top: 2px solid #0a84ff; margin-left: 1px; margin-right: 1px; width: 74px; padding-left: 8px; padding-bottom: 2px; gap: 6px; }
.tlabel { width: 37px; overflow: hidden; white-space: nowrap; font-size: 13px; letter-spacing: -0.45px; color: #f5f5f5; mask-image: linear-gradient(90deg, #000 40%, transparent 100%); line-height: 18px; margin-top: -1px; }
.noicon .tlabel { width: 59px; mask-image: linear-gradient(90deg, #000 65%, transparent); }
.active .tlabel { width: 18px; color: #c8c8c8; }
.tclose { width: 10px; height: 10px; margin-left: -1px; }
.right { width: 33px; padding-left: 9px; }
.plus { width: 14px; height: 14px; margin-right: 17px; }
.down { width: 11px; height: 8px; }

.toolbar { height: 37px; flex: none; background: #323234; border-bottom: 1px solid #0c0c0d; display: flex; align-items: center; }
.navbtns { display: flex; gap: 14px; padding-left: 7px; width: 156px; }
.urlbar { width: 545px; height: 26px; border: 1px solid #29292b; border-radius: 3px; background: #474749; display: flex; align-items: center; padding-left: 8px; }
.lockg { margin-left: 5px; }
.url { font-size: 12.5px; letter-spacing: -0.420px; color: #9b9b9c; width: 373px; margin-left: 11px; overflow: hidden; white-space: nowrap; mask-image: linear-gradient(90deg, #000 88%, transparent 100%); line-height: 22px; padding-top: 1px; }
.url b { font-weight: 400; color: #f9f9fa; }
.urlicons { display: flex; align-items: center; gap: 8px; margin-left: auto; padding-right: 3px; }
.search { margin-left: 10px; width: 164px; height: 26px; border: 1px solid #29292b; border-radius: 3px; background: #474749; display: flex; align-items: center; gap: 7px; padding-left: 8px; color: #a9a9aa; font-size: 13px; letter-spacing: -0.3px; }
.tools { display: flex; margin-left: 35px; width: 431px; height: 36px; }
.pressed::before { content: ""; width: 26px; height: 26px; border-radius: 3px; background: #6b6b6d; margin-right: -21px; flex: none; }
.pressed svg { position: relative; margin-right: 5px; }
.badge { position: absolute; left: 16px; top: 4px; width: 14px; height: 15px; background: #666; color: #fff; font-size: 10px; line-height: 14px; text-align: center; }
.menu { margin-left: 1px; }

.content { height: 621px; flex: none; display: flex; position: relative; }
.sidebar { width: 168px; background: #a7a7a7; display: flex; flex-direction: column; flex: none; overflow: hidden; }
.sbhead { height: 46px; background: #fff; border-bottom: 2px solid #d8d8d8; display: flex; align-items: center; padding: 0 0 0 14px; color: #444; flex: none; }
.sbtitle { font-size: 16px; margin-left: 9px; width: 76.500px; color: #444; white-space: nowrap; margin-top: -1px; }
.sbdown { width: 11px; height: 8px; }
.sbx { width: 11px; height: 11px; margin-left: 17px; }
.rows { display: flex; flex-direction: column; filter: drop-shadow(-1px 2px 2px rgba(0, 0, 0, 0.28)); }
.trow { height: 31px; background: linear-gradient(#e9e9e9, #f1f1f1); border-bottom: 1px solid #cfcfcf; display: flex; align-items: center; font-size: 12px; color: #3c3c3c; white-space: nowrap; padding-right: 11px; }
.trow .i16 { margin-right: 3px; }
.twisty { width: 19px; padding-left: 8px; flex: none; }
.lv1 { margin-left: 12px; } .lv2 { margin-left: 24px; } .lv3 { margin-left: 36px; } .lv4 { margin-left: 48px; }
.lv1, .lv2, .lv3, .lv4 { border-left: 1px solid #ccc; }
.sel { background: #bccdec; }
.rlabel { flex: 1; min-width: 0; }
.rx { font-family: "DejaVu Sans", sans-serif; font-size: 11px; color: #646464; -webkit-text-stroke: 0.4px #646464; }
.addrow { height: 18px; background: #efefef; display: flex; align-items: center; justify-content: center; padding-right: 7px; }
.splitter { width: 6px; background: #efefef; border-left: 1px solid #b9b9b9; border-right: 1px solid #d5d5d5; flex: none; }

.timeline { width: 533px; background: #fff; flex: none; font-family: Roboto, sans-serif; position: relative; z-index: 2; box-shadow: 1px 0 5px rgba(0, 0, 0, 0.4); color: #212121; clip-path: inset(0 -10px 0 0); }
.thead { height: 64px; display: flex; align-items: center; padding-left: 26px; }
.tlogo { width: 21px; height: 21px; }
h1 { margin: 0 0 0 17px; font-size: 20px; font-weight: 500; color: #5c5c5c; line-height: 24px; width: 91px; letter-spacing: -0.1px; }
.tlock { width: 12px; height: 15px; margin-top: 1px; }
.today { margin-left: auto; margin-right: 24.500px; font-size: 14px; font-weight: 500; color: #5c5c5c; }
.filters { height: 49px; background: #eee; border-bottom: 1px solid #dcdcdc; display: flex; align-items: center; font-size: 15px; color: #4e4e4e; position: relative; }
.filter { height: 28px; display: flex; align-items: center; justify-content: space-between; border-right: 1px solid #ddd; }
.filter .tri { color: #888; margin-right: 15px; margin-top: 1px; }
.year { margin-left: 24px; width: 73px; }
.month { width: 121px; padding-left: 16px; }
.day { width: 100px; padding-left: 16px; border: 0; }
.tri { width: 10px; height: 5px; }
.tip { position: absolute; left: 453px; top: 3px; width: 83px; height: 64px; background: #fff; border-radius: 2px; box-shadow: 0 1px 4px rgba(0, 0, 0, 0.45); padding: 8px 8px; color: #212121; font-size: 13px; line-height: 16px; z-index: 3; display: flex; flex-direction: column; letter-spacing: -0.2px; }
.tip strong { font-size: 16px; font-weight: 400; line-height: 17px; white-space: nowrap; letter-spacing: 0; }
.chart { height: 88px; display: flex; background: #fafafa; }
.strip { width: 24px; background: #f5f5f5; color: #666; display: flex; align-items: center; justify-content: center; flex: none; }
.strip:first-child { padding-right: 1px; }
.strip:last-child { padding-left: 1px; }
.bars { width: 485px; display: flex; align-items: flex-end; gap: 2.970px; padding-bottom: 20px; overflow: hidden; }
.bar { width: 11px; background: #e0e0e0; flex: none; display: flex; align-items: flex-end; }
.bar:first-child { width: 9px; }
.bar.idle { background: #bdbdbd; }
.bar i { width: 11px; height: 15px; background: #4285f4; }
.cur { outline: 1px solid #b9b9b9; outline-offset: 0; border-top: 2px solid #9a9a9a; box-sizing: content-box; }
.cur i { background: #2a56c6; border: 1px solid #2045a8; }
.dateline { height: 70px; display: flex; align-items: center; padding-left: 24px; color: #616161; }
h2 { margin: 0; font-size: 20px; font-weight: 400; color: #212121; width: 372.500px; white-space: nowrap; }
.dprev, .dnext { width: 8px; height: 12px; }
.dnext { margin-left: 41px; }
.dtrash { width: 14px; height: 18px; margin-left: 36.500px; color: #757575; }
.addplace { height: 102px; border-bottom: 1px solid #e0e0e0; display: flex; align-items: center; padding: 32px 0 0 18px; box-shadow: 0 2px 0 #f8f8f8; }
.btn { border: 1px solid #e5e5e5; border-radius: 2px; height: 28px; width: 72px; margin-left: 58px; font-size: 11px; font-weight: 500; color: #616161; line-height: 27px; text-align: center; white-space: nowrap; }
.place { height: 42px; margin-top: 19px; display: flex; align-items: center; padding-left: 18px; }
.pin { width: 26px; height: 26px; border-radius: 50%; box-shadow: 0 1px 1px rgba(0, 0, 0, 0.3); display: flex; align-items: center; justify-content: center; flex: none; margin-top: -2px; }
.pin i { width: 10px; height: 10px; background: #78909c; }
.select { margin-left: 40px; width: 218px; height: 42px; border: 1px solid #dcdcdc; border-radius: 2px; display: flex; align-items: center; justify-content: space-between; padding: 0 19px 0 12px; font-size: 13px; font-weight: 500; flex: none; letter-spacing: -0.15px; }
.select .tri { color: #757575; }
.time { margin-left: auto; font-size: 12px; letter-spacing: 0.25px; color: #757575; }
.kebab { margin: 0 26px 0 25px; }
.addr { font-size: 12px; color: #757575; letter-spacing: 0.13px; margin: 7px 0 0 96px; line-height: 14px; }

.map { flex: 1; position: relative; font-family: Roboto, sans-serif; overflow: hidden; }
.roads { width: 659px; height: 621px; }
.account { position: absolute; right: 29px; top: 15px; display: flex; align-items: center; z-index: 2; }
.account svg + svg { margin-left: 27px; }
.avatar { width: 32px; height: 32px; border-radius: 50%; background: #ef6c00; color: #fff; margin-left: 19px; font-size: 18px; line-height: 33px; text-align: center; }
.full { position: absolute; right: 14px; top: 10px; width: 25px; height: 25px; background: #fff; padding: 5px 0 0 4px; }
.zoom { position: absolute; right: 10px; top: 507px; width: 28px; height: 55px; background: #fff; border-radius: 2px; box-shadow: 0 1px 4px rgba(0, 0, 0, 0.3); display: flex; flex-direction: column; align-items: center; padding: 8px 0; justify-content: space-between; }
.zoom hr { width: 19px; border: 0; height: 1px; background: #ddd; margin: 0; }
.mapbar { position: absolute; right: 10px; top: 582px; display: flex; align-items: center; }
.mtrash { width: 14px; height: 18px; color: #212121; margin: -1px 19px 0 0; }
.m20 { width: 20px; height: 20px; margin: -1px 19px 0 0; }
.m20 + .m20 { margin-right: 27px; }
.types { display: flex; background: #fff; height: 29px; width: 96px; border-radius: 2px; box-shadow: 0 1px 4px rgba(0, 0, 0, 0.3); font-size: 11px; color: #5a5a5a; line-height: 29px; text-align: center; letter-spacing: 0.2px; }
.types span:first-child { width: 38px; border-right: 1px solid #ddd; }
.types span:last-child { width: 58px; }
.fade { position: absolute; left: 174px; right: 0; bottom: 0; height: 20px; background: linear-gradient(transparent, rgba(0, 0, 0, 0.2)); z-index: 4; }

.taskbar { height: 27px; flex: none; background: #151a1d; display: flex; color: #cfd6da; font-size: 13px; }
.win { display: flex; align-items: center; height: 27px; white-space: nowrap; flex: none; padding-left: 2px; border-bottom: 3px solid transparent; padding-top: 3px; }
.win svg { width: 13px; height: 13px; margin-right: 5px; }
.w1 { margin-left: 9px; width: 298px; padding-left: 0; letter-spacing: -0.11px; }
.win.w1 svg { margin-right: 8px; }
.w2 { width: 298px; letter-spacing: -0.1px; }
.w3 { width: 284px; letter-spacing: -0.11px; }
.w4 { width: 171px; border-bottom-color: #00bcd4; color: #fff; padding-left: 3px; letter-spacing: -0.19px; }
.w5 { padding-left: 6px; letter-spacing: -0.11px; }
.win.w4 svg, .win.w5 svg { width: 15px; height: 15px; margin-right: 3px; }
.win.w4 svg { margin-right: 4px; }
</style>
